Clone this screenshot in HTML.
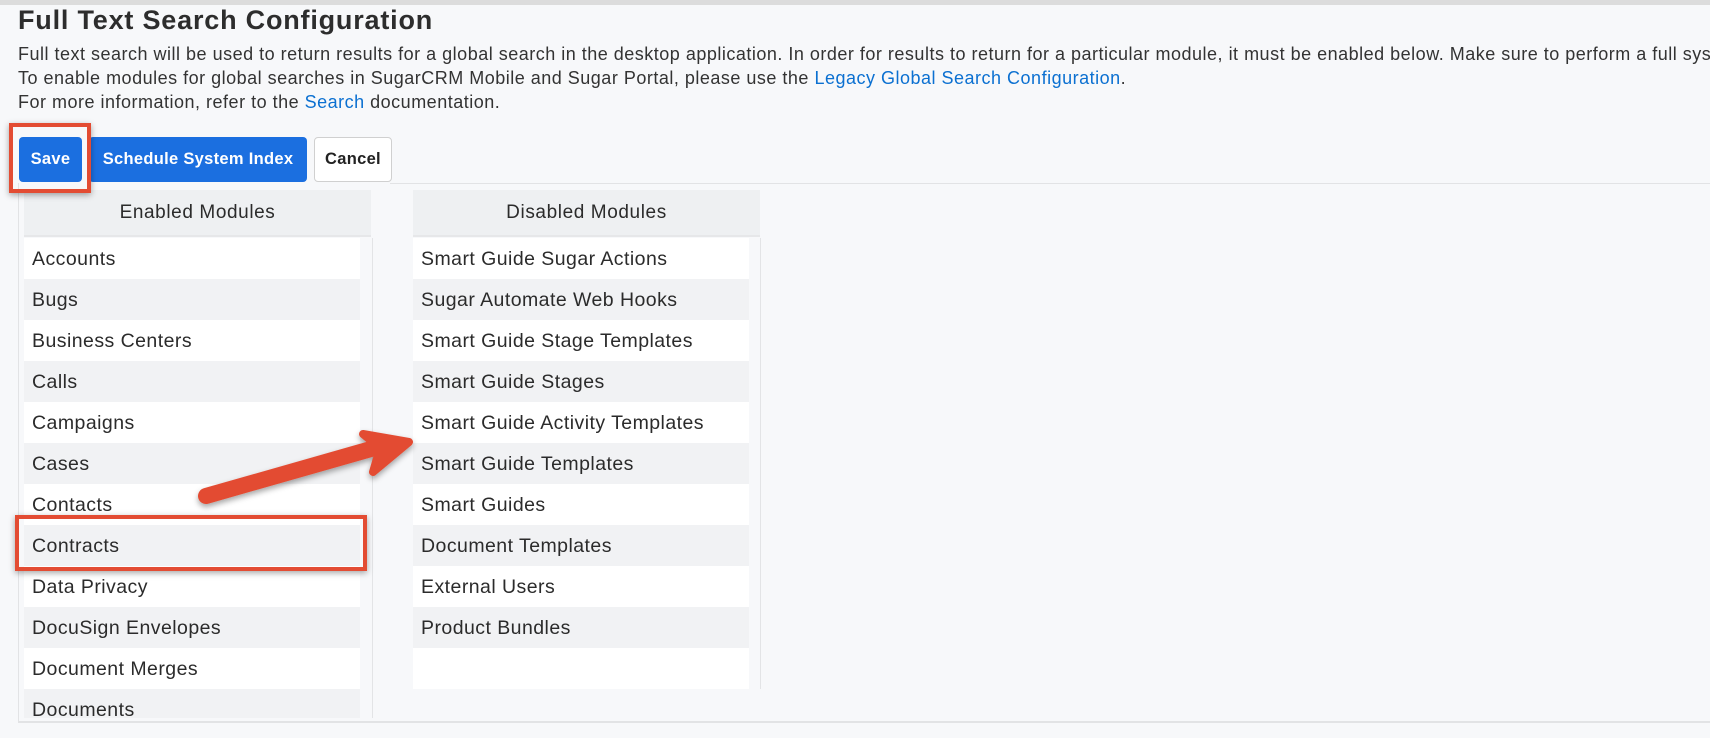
<!DOCTYPE html>
<html><head><style>
*{margin:0;padding:0;box-sizing:border-box}
body{width:1710px;height:738px;overflow:hidden;background:#f7f8fa;font-family:"Liberation Sans",Arial,sans-serif;color:#2b2b2b;position:relative}
.top{position:absolute;left:0;top:0;width:1710px;height:5px;background:#dcdcdc}
h1{position:absolute;left:18px;top:5px;font-size:27px;letter-spacing:0.8px;font-weight:bold;color:#2d2d2d}
.desc{position:absolute;left:18px;top:42px;width:1692px;overflow:hidden;font-size:18px;letter-spacing:0.5px;line-height:24px;white-space:nowrap;color:#333}
.desc a{color:#0b70d1;text-decoration:none}
.btn{position:absolute;top:137px;height:45px;border-radius:4px;font-weight:bold;font-size:16.5px;letter-spacing:0.3px;display:flex;align-items:center;justify-content:center}
.blue{background:#1b6fe0;color:#fff}
.cancel{background:#fff;border:1px solid #d0d0d0;color:#222}
.hline{position:absolute;left:390px;top:183px;width:1320px;height:1px;background:#e2e3e5}
.cont{position:absolute;left:18px;top:183px;width:1692px;height:540px;border-left:1px solid #e2e3e5;border-bottom:2px solid #e2e3e5}
.hdr{position:absolute;top:190px;height:47px;background:#eef0f2;font-size:19px;letter-spacing:0.6px;display:flex;align-items:center;justify-content:center;border-bottom:2px solid #e6e7e9}
.list{position:absolute;top:238px;overflow:hidden}
.row{height:41px;line-height:42px;padding-left:8px;font-size:19.5px;letter-spacing:0.45px;color:#2b2b2b;white-space:nowrap}
.row:nth-child(odd){background:#fff}.row:nth-child(even){background:#f1f2f4}
.vl{position:absolute;width:1px;background:#e3e4e6}
.red{position:absolute;border:4px solid #e34c33;box-shadow:0 2px 6px rgba(0,0,0,.35)}
</style></head><body>
<div class="top"></div>
<h1>Full Text Search Configuration</h1>
<div class="desc">Full text search will be used to return results for a global search in the desktop application. In order for results to return for a particular module, it must be enabled below. Make sure to perform a full sys<br>To enable modules for global searches in SugarCRM Mobile and Sugar Portal, please use the <a>Legacy Global Search Configuration</a>.<br>For more information, refer to the <a>Search</a> documentation.</div>
<div class="cont"></div>
<div class="hline"></div>
<div class="btn blue" style="left:19px;width:63px">Save</div>
<div class="btn blue" style="left:89px;width:218px">Schedule System Index</div>
<div class="btn cancel" style="left:314px;width:78px">Cancel</div>
<div class="hdr" style="left:24px;width:347px">Enabled Modules</div>
<div class="hdr" style="left:413px;width:347px">Disabled Modules</div>
<div class="list" style="left:24px;width:336px;height:480px">
<div class="row">Accounts</div><div class="row">Bugs</div><div class="row">Business Centers</div><div class="row">Calls</div><div class="row">Campaigns</div><div class="row">Cases</div><div class="row">Contacts</div><div class="row">Contracts</div><div class="row">Data Privacy</div><div class="row">DocuSign Envelopes</div><div class="row">Document Merges</div><div class="row">Documents</div>
</div>
<div class="vl" style="left:372px;top:238px;height:480px"></div>
<div class="list" style="left:413px;width:336px;height:451px">
<div class="row">Smart Guide Sugar Actions</div><div class="row">Sugar Automate Web Hooks</div><div class="row">Smart Guide Stage Templates</div><div class="row">Smart Guide Stages</div><div class="row">Smart Guide Activity Templates</div><div class="row">Smart Guide Templates</div><div class="row">Smart Guides</div><div class="row">Document Templates</div><div class="row">External Users</div><div class="row">Product Bundles</div><div class="row"></div>
</div>
<div class="vl" style="left:760px;top:238px;height:451px"></div>
<div class="red" style="left:9px;top:123px;width:82px;height:70px"></div>
<div class="red" style="left:15px;top:515px;width:352px;height:56px"></div>
<svg style="position:absolute;left:0;top:0" width="1710" height="738">
<defs><filter id="s" x="-20%" y="-20%" width="140%" height="160%"><feDropShadow dx="0" dy="3" stdDeviation="3" flood-opacity=".35"/></filter></defs>
<g filter="url(#s)" fill="#e34c33" stroke="#e34c33" stroke-linejoin="round" stroke-linecap="round">
<line x1="206" y1="496" x2="385" y2="445" stroke-width="16"/>
<path d="M363 434 L409 442 L373 472 L380 448 Z" stroke-width="8"/>
</g>
</svg>
</body></html>
